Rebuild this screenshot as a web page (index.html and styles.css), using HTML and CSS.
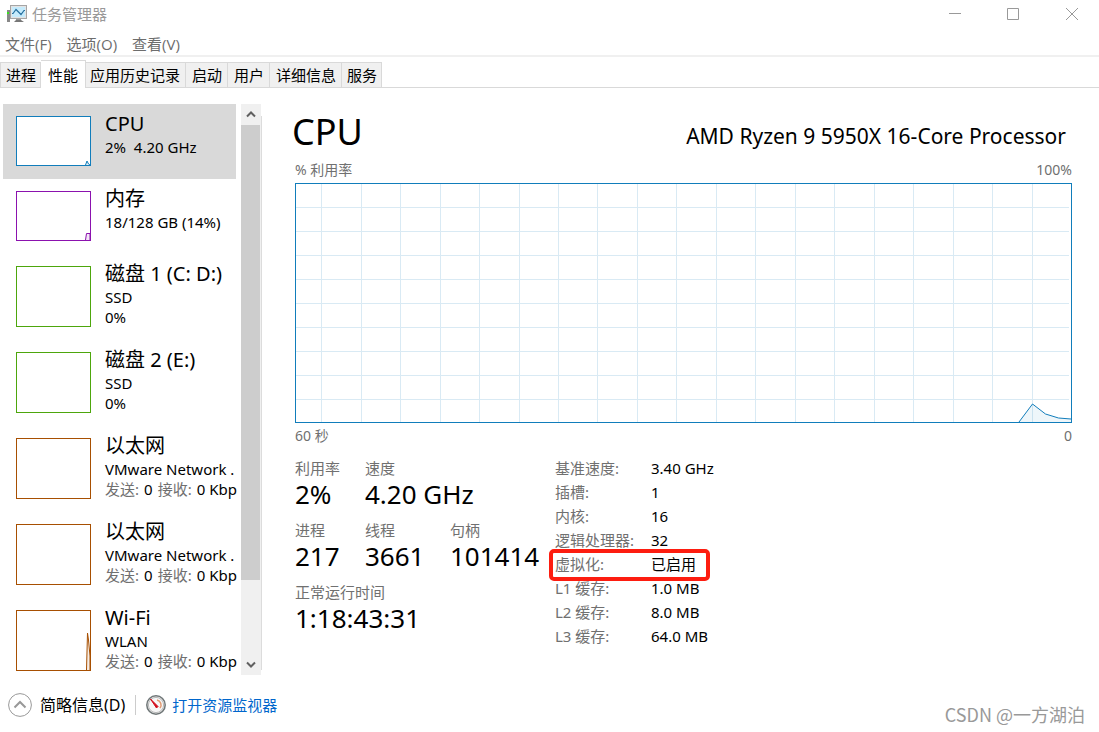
FILE: index.html
```html
<!DOCTYPE html>
<html lang="zh-CN">
<head>
<meta charset="utf-8">
<meta name="viewport" content="width=device-width, initial-scale=1">
<title>任务管理器</title>
<link rel="stylesheet" href="styles.css">
</head>
<body>
<div class="app">
  <header class="titlebar">
    <svg class="app-icon" width="20" height="18" viewBox="0 0 20 18" aria-hidden="true">
      <rect x="0" y="5" width="3" height="12" fill="#888"/>
      <rect x="0" y="7" width="2" height="2" fill="#35e01c"/>
      <path d="M9 14h5v2H9z" fill="#999"/>
      <path d="M7 17l2-2h5l3 2z" fill="#777"/>
      <rect x="3.5" y=".5" width="16" height="13" fill="#e3e3e3" stroke="#a5a5a5"/>
      <rect x="5" y="2" width="13" height="10" fill="#c5ebfc"/>
      <path d="M5 8.500h1l3-4 5 5 3-4h1" fill="none" stroke="#256f9e" stroke-width="1.200"/>
    </svg>
    <h1 class="app-title">任务管理器</h1>
    <div class="window-buttons">
      <button class="window-button" aria-label="最小化"><svg width="14" height="14" viewBox="0 0 14 14"><path d="M1 6.500h12"/></svg></button>
      <button class="window-button" aria-label="最大化"><svg width="14" height="14" viewBox="0 0 14 14"><path d="M1.500 1.500h11v11h-11z"/></svg></button>
      <button class="window-button" aria-label="关闭"><svg width="14" height="14" viewBox="0 0 14 14"><path d="M1 1l12 12M13 1L1 13"/></svg></button>
    </div>
  </header>
  <nav class="menubar">
    <button class="menu">文件(F)</button>
    <button class="menu">选项(O)</button>
    <button class="menu">查看(V)</button>
  </nav>
  <div class="tabs" role="tablist">
    <button class="tab" role="tab">进程</button>
    <button class="tab tab-active" role="tab" aria-selected="true">性能</button>
    <button class="tab" role="tab">应用历史记录</button>
    <button class="tab" role="tab">启动</button>
    <button class="tab" role="tab">用户</button>
    <button class="tab" role="tab">详细信息</button>
    <button class="tab" role="tab">服务</button>
  </div>
  <div class="content">
    <aside class="sidebar">
      <ul class="devices">
        <li class="device device-selected">
          <svg class="thumb thumb-short cpu" viewBox="0 0 73 48"><path d="M68.500 48l1.500-4 1.500 3 1.500 1"/></svg>
          <div class="device-text"><h2 class="device-name">CPU</h2><p class="device-line">2%&nbsp; 4.20 GHz</p></div>
        </li>
        <li class="device">
          <svg class="thumb thumb-short memory" viewBox="0 0 73 48"><path d="M68.500 48l1-6.500H73V48"/></svg>
          <div class="device-text"><h2 class="device-name">内存</h2><p class="device-line">18/128 GB (14%)</p></div>
        </li>
        <li class="device">
          <svg class="thumb disk" viewBox="0 0 73 59"></svg>
          <div class="device-text"><h2 class="device-name">磁盘 1 (C: D:)</h2><p class="device-line">SSD</p><p class="device-line">0%</p></div>
        </li>
        <li class="device">
          <svg class="thumb disk" viewBox="0 0 73 59"></svg>
          <div class="device-text"><h2 class="device-name">磁盘 2 (E:)</h2><p class="device-line">SSD</p><p class="device-line">0%</p></div>
        </li>
        <li class="device">
          <svg class="thumb network" viewBox="0 0 73 59"></svg>
          <div class="device-text"><h2 class="device-name">以太网</h2><p class="device-line">VMware Network .</p><p class="device-line rates"><span class="muted">发送:</span><span>0</span><span class="muted">接收:</span><span>0 Kbp</span></p></div>
        </li>
        <li class="device">
          <svg class="thumb network" viewBox="0 0 73 59"></svg>
          <div class="device-text"><h2 class="device-name">以太网</h2><p class="device-line">VMware Network .</p><p class="device-line rates"><span class="muted">发送:</span><span>0</span><span class="muted">接收:</span><span>0 Kbp</span></p></div>
        </li>
        <li class="device">
          <svg class="thumb network" viewBox="0 0 73 59"><path d="M69.500 59l1-37 1 7 1.500 16v14"/></svg>
          <div class="device-text"><h2 class="device-name">Wi-Fi</h2><p class="device-line">WLAN</p><p class="device-line rates"><span class="muted">发送:</span><span>0</span><span class="muted">接收:</span><span>0 Kbp</span></p></div>
        </li>
      </ul>
      <div class="scrollbar">
        <button class="scroll-button" aria-label="向上滚动"><svg width="10" height="7" viewBox="0 0 10 7"><path d="M1 5.500l4-4 4 4"/></svg></button>
        <div class="scroll-track"><div class="scroll-thumb"></div></div>
        <button class="scroll-button" aria-label="向下滚动"><svg width="10" height="7" viewBox="0 0 10 7"><path d="M1 1.500l4 4 4-4"/></svg></button>
      </div>
      <div class="divider"></div>
    </aside>
    <main class="details">
      <div class="heading">
        <h2 class="heading-title">CPU</h2>
        <p class="heading-model">AMD Ryzen 9 5950X 16-Core Processor</p>
      </div>
      <div class="axis axis-top"><span>% 利用率</span><span>100%</span></div>
      <svg class="graph" viewBox="0 0 775 238" preserveAspectRatio="none" role="img" aria-label="CPU 利用率">
        <path class="grid" d="M25.500 0v238M65.500 0v238M104.500 0v238M144.500 0v238M183.500 0v238M223.500 0v238M262.500 0v238M301.500 0v238M341.500 0v238M380.500 0v238M420.500 0v238M459.500 0v238M499.500 0v238M538.500 0v238M578.500 0v238M617.500 0v238M657.500 0v238M696.500 0v238M736.500 0v238"/>
        <path class="grid" d="M0 23.500h773M0 47.500h773M0 71.500h773M0 95.500h773M0 119.500h773M0 143.500h773M0 167.500h773M0 191.500h773M0 215.500h773"/>
        <path class="usage-area" d="M723 238l13.500-18 13 10 13 4 12.500 1v3z"/>
        <path class="usage-line" d="M723 238l13.500-18 13 10 13 4 12.500 1"/>
      </svg>
      <div class="axis axis-bottom"><span>60 秒</span><span>0</span></div>
      <div class="stats">
        <dl class="live">
          <div><dt>利用率</dt><dd>2%</dd></div>
          <div class="live-wide"><dt>速度</dt><dd>4.20 GHz</dd></div>
          <div><dt>进程</dt><dd>217</dd></div>
          <div><dt>线程</dt><dd>3661</dd></div>
          <div><dt>句柄</dt><dd>101414</dd></div>
          <div class="live-full"><dt>正常运行时间</dt><dd>1:18:43:31</dd></div>
        </dl>
        <dl class="specs">
          <div class="spec"><dt>基准速度:</dt><dd>3.40 GHz</dd></div>
          <div class="spec"><dt>插槽:</dt><dd>1</dd></div>
          <div class="spec"><dt>内核:</dt><dd>16</dd></div>
          <div class="spec"><dt>逻辑处理器:</dt><dd>32</dd></div>
          <div class="spec spec-marked"><dt>虚拟化:</dt><dd>已启用</dd></div>
          <div class="spec"><dt>L1 缓存:</dt><dd>1.0 MB</dd></div>
          <div class="spec"><dt>L2 缓存:</dt><dd>8.0 MB</dd></div>
          <div class="spec"><dt>L3 缓存:</dt><dd>64.0 MB</dd></div>
        </dl>
      </div>
    </main>
  </div>
  <footer class="footer">
    <button class="fewer">
      <svg width="24" height="24" viewBox="0 0 24 24" aria-hidden="true"><circle cx="12" cy="12" r="11.400" fill="#fff" stroke="#999"/><path d="M6.500 14.500L12 9l5.500 5.500" fill="none" stroke="#999" stroke-width="2"/></svg>
      <span>简略信息(D)</span>
    </button>
    <a class="monitor" href="#">
      <svg width="20" height="20" viewBox="0 0 20 20" aria-hidden="true"><circle cx="10" cy="10" r="9.200" fill="#eee" stroke="#6f7677" stroke-width="1.500"/><circle cx="10" cy="10" r="7.600" fill="#f7f7f7" stroke="#b9b9b9"/><path d="M11 5a5 5 0 0 1 3 8" fill="none" stroke="#e29a72" stroke-width="1.500"/><path d="M4.500 4l7.500 7.500-1.500 1.500z" fill="#d30d1b" stroke="#d30d1b"/></svg>
      <span>打开资源监视器</span>
    </a>
    <span class="watermark">CSDN @一方湖泊</span>
  </footer>
</div>
</body>
</html>
```
FILE: styles.css
```css
* { box-sizing: border-box; }
body, h1, h2, p, ul, dl, dt, dd { margin: 0; padding: 0; font-weight: 400; }
body {
  background: #fff;
  color: #000;
  font: 15px/20px "Noto Sans", "Noto Sans CJK SC", sans-serif;
}
button {
  margin: 0;
  padding: 0;
  border: 0;
  background: none;
  color: inherit;
  font: inherit;
}
.app { display: flex; flex-direction: column; height: 100vh; overflow: hidden; }

.titlebar { display: flex; align-items: center; height: 27px; padding-left: 7px; flex: none; }
.app-title { margin-left: 5px; color: #999; font-size: 15px; line-height: 26px; }
.window-buttons { display: flex; margin-left: auto; }
.window-button { display: grid; place-items: center; width: 58px; height: 26px; }
.window-button:last-child { width: 59px; }
.window-buttons { margin-right: -2px; }
.window-button path { fill: none; stroke: #999; }

.menubar {
  display: flex;
  flex: none;
  gap: 15px;
  height: 30px;
  padding: 0 5px;
  border-bottom: 2px solid #f0f0f0;
  color: #6d6d6d;
  font-family: "Open Sans", "Noto Sans CJK SC", sans-serif;
  font-size: 15px;
}
.menu { height: 33px; }

.tabs { display: flex; flex: none; align-items: flex-end; height: 31px; border-bottom: 1px solid #d9d9d9; }
.tab {
  height: 25px;
  padding: 0 5px;
  border: 1px solid #d9d9d9;
  border-left-width: 0;
  border-bottom: 0;
  background: #f0f0f0;
  line-height: 24px;
  white-space: nowrap;
}
.tab:first-child { padding-right: 4px; border-left-width: 1px; }
.tab-active { height: 28px; margin-bottom: -1px; padding: 0 7px; background: #fff; }
.tab:nth-child(3) { padding: 0 5px 0 4px; }
.tab:nth-child(4), .tab:nth-child(5), .tab:nth-child(6) { padding: 0 5px 0 6px; }
.tab:last-child { padding: 0 4px 0 5px; }

.content { display: flex; flex: 1; min-height: 0; padding-top: 16px; }
.sidebar { display: flex; flex: none; width: 262px; padding-left: 3px; }
.devices { flex: 1; min-width: 0; overflow: hidden; list-style: none; }
.device { display: flex; gap: 14px; width: 233px; padding: 12px 0 13px 13px; white-space: nowrap; }
.device-selected { background: #d9d9d9; }
.thumb { flex: none; width: 75px; height: 61px; border: 1px solid currentColor; background: #fff; }
.thumb-short { height: 50px; }
.thumb path { fill: currentColor; fill-opacity: 0.100; stroke: currentColor; }
.cpu { color: #117dbb; }
.memory { color: #8b12ae; }
.disk { color: #4da60c; }
.network { color: #a74f01; }
.device-text { height: 50px; margin-top: -4px; }
.device-name { margin-bottom: 1px; font-size: 20px; line-height: 24px; }
.device-line { line-height: 20px; }
.rates { display: flex; gap: 5px; }
.muted { color: #707070; }

.scrollbar { display: flex; flex-direction: column; flex: none; width: 20px; background: #f0f0f0; }
.scroll-button { display: grid; place-items: center; flex: none; height: 21px; }
.scroll-button path { fill: none; stroke: #606060; stroke-width: 2; }
.scroll-track { flex: 1; }
.scroll-thumb { width: 19px; height: 86%; background: #cdcdcd; }
.divider { width: 1px; margin: 12px 0 5px; background: #dcdcdc; }

.details { display: flex; flex-direction: column; flex: 1; min-width: 0; padding: 0 27px 25px 33px; }
.heading { display: flex; justify-content: space-between; height: 56px; padding-right: 6px; }
.heading-title { margin-left: -3px; font-size: 36px; line-height: 56px; }
.heading-model { font-size: 21px; line-height: 64px; white-space: nowrap; }
.axis { display: flex; justify-content: space-between; color: #707070; font-size: 14px; }
.axis-top { height: 23px; }
.axis-bottom { height: 35px; padding-top: 3px; }
.graph { flex: 1; min-height: 0; width: 100%; border: 1px solid #117dbb; }
.graph path { vector-effect: non-scaling-stroke; }
.grid { fill: none; stroke: #d9eaf4; }
.usage-area { fill: #117dbb; fill-opacity: 0.070; }
.usage-line { fill: none; stroke: #117dbb; }

.stats { display: flex; }
.stats dt { color: #707070; }
.live { display: grid; grid-template-columns: 70px 85px 105px; grid-auto-rows: 62px; }
.live dd { font-size: 26px; line-height: 32px; white-space: nowrap; }
.live-wide { grid-column: span 2; }
.live-full { grid-column: span 3; }
.spec { position: relative; display: grid; grid-template-columns: 96px 66px; height: 24px; }
.spec dd { white-space: nowrap; }
.spec-marked::after {
  content: "";
  position: absolute;
  inset: -5px 7px -3px -6px;
  border: 4px solid #fd1d10;
  border-radius: 5px;
}

.footer { position: relative; display: flex; align-items: center; flex: none; height: 57px; padding: 2px 8px 0; }
.fewer, .monitor { display: flex; align-items: center; }
.fewer { gap: 8px; font-size: 16px; }
.monitor {
  gap: 6px;
  margin-left: 10px;
  padding-left: 10px;
  border-left: 1px solid #ccc;
  color: #0066cc;
  text-decoration: none;
}
.watermark {
  position: absolute;
  right: 14px;
  bottom: 8px;
  color: #999;
  font-family: "Noto Sans CJK SC", sans-serif;
  font-size: 18px;
}
```
